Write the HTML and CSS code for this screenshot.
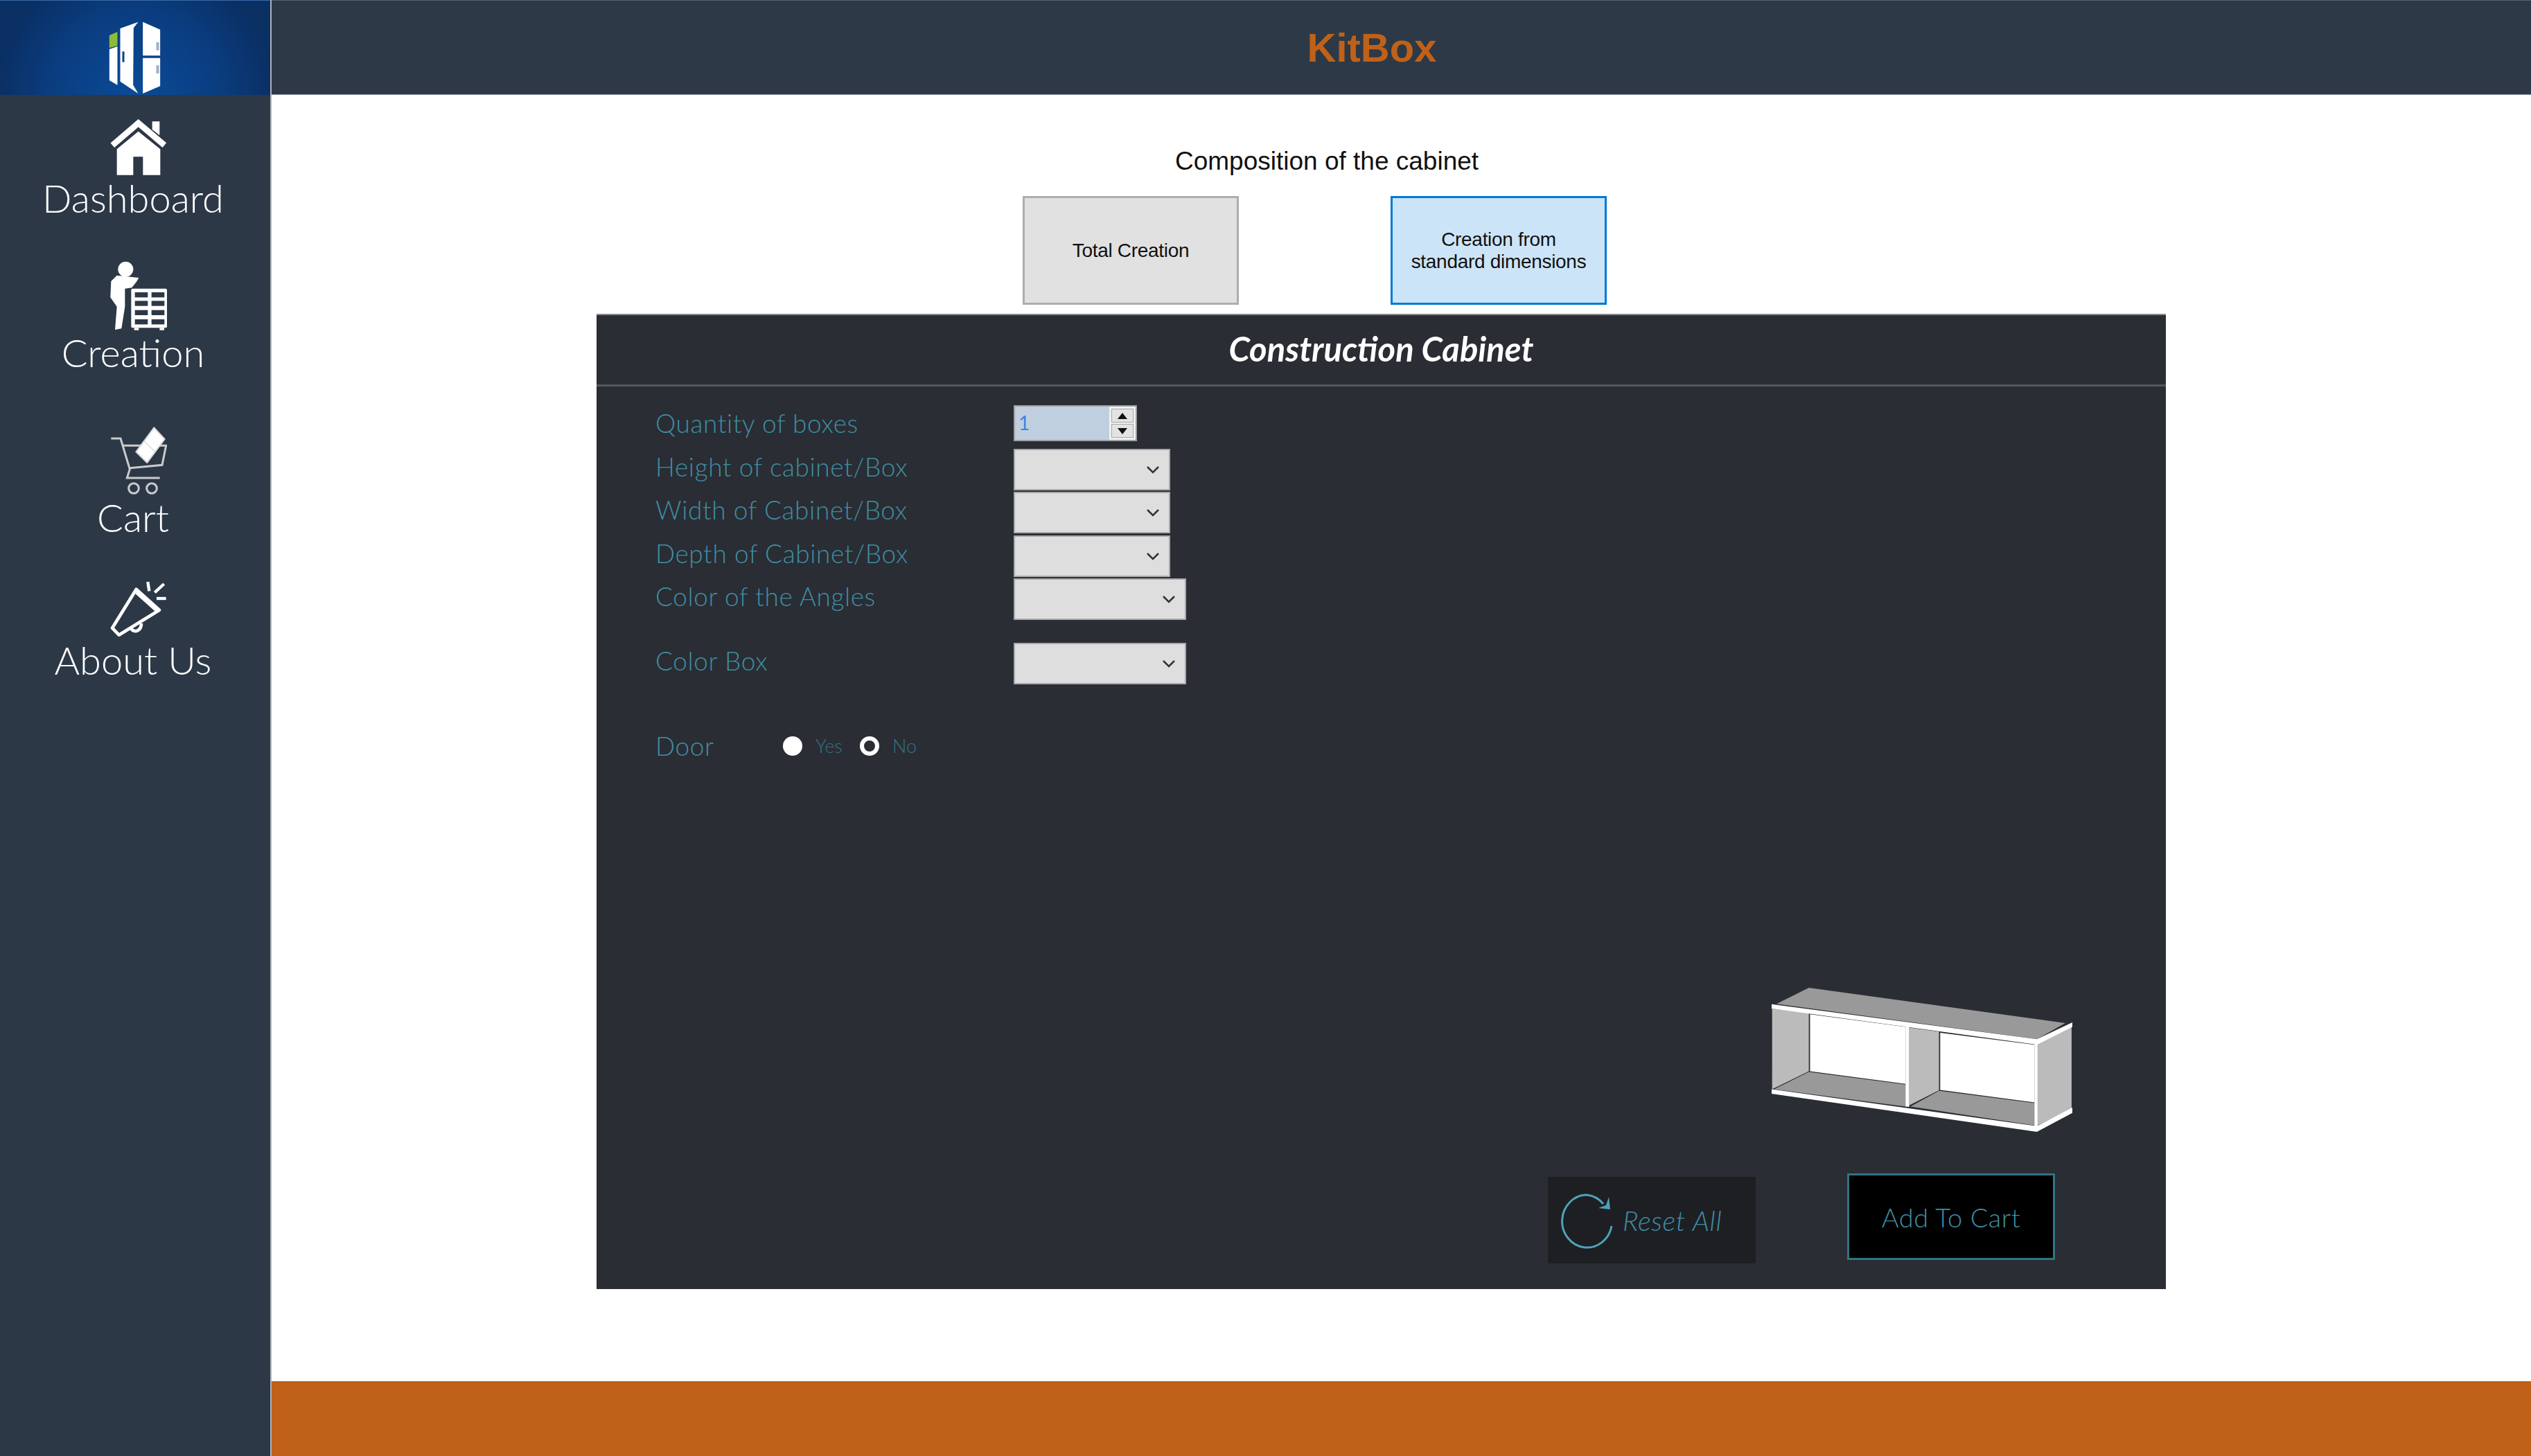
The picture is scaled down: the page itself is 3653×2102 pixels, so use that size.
FILE: index.html
```html
<!DOCTYPE html>
<html>
<head>
<title>KitBox</title>
<meta charset="UTF-8" />
<link rel="stylesheet" href="styles.css">
</head>
<body>
<div class="app">
	<nav class="sidebar">
		<div class="brand">
			<svg class="logo" viewBox="470 90 230 315">
				<polygon fill="#8dbb35" points="475,150 510,135 510,195 475,205"/>
				<polygon fill="#fff" points="475,210 510,198 510,365 475,345"/>
				<polygon fill="#fff" points="522,120 600,92 580,118 578,365 600,402 522,350"/>
				<rect fill="#0b4288" x="531" y="220" width="9" height="46"/>
				<polygon fill="#fff" points="620,92 695,125 695,238 620,238"/>
				<polygon fill="#fff" points="620,248 695,248 695,370 620,402"/>
				<rect fill="#9fb0c4" x="678" y="180" width="12" height="35"/>
				<rect fill="#9fb0c4" x="678" y="280" width="12" height="35"/>
			</svg>
		</div>
		<a class="navItem navDashboard">
			<svg class="navIcon" width="82" height="82" viewBox="468 515 246 246">
				<polygon fill="#fff" points="650,525 682,525 682,585 650,560"/>
				<polyline fill="none" stroke="#fff" stroke-width="26" points="478,628 590,532 703,628"/>
				<polygon fill="#fff" points="497,645 590,568 685,645 685,757 610,757 610,678 568,678 568,757 497,757"/>
			</svg>
			<span>Dashboard</span>
		</a>
		<a class="navItem navCreation">
			<svg class="navIcon" width="84" height="100" viewBox="458 1103 252 300">
				<circle fill="#fff" cx="528" cy="1138" r="33"/>
				<path fill="#fff" d="M490 1165 L585 1175 L575 1192 L555 1218 L525 1222 L525 1300 L510 1395 L482 1400 L490 1300 L462 1260 L465 1190 Z"/>
				<rect fill="#fff" x="552" y="1222" width="155" height="170" rx="6"/>
				<rect fill="#fff" x="565" y="1392" width="20" height="10"/>
				<rect fill="#fff" x="675" y="1392" width="20" height="10"/>
				<g fill="#2d3847">
					<rect x="568" y="1238" width="56" height="22"/>
					<rect x="640" y="1238" width="56" height="22"/>
					<rect x="568" y="1275" width="56" height="22"/>
					<rect x="640" y="1275" width="56" height="22"/>
					<rect x="568" y="1315" width="56" height="22"/>
					<rect x="640" y="1315" width="56" height="22"/>
					<rect x="568" y="1355" width="56" height="22"/>
					<rect x="640" y="1355" width="56" height="22"/>
				</g>
			</svg>
			<span>Creation</span>
		</a>
		<a class="navItem navCart">
			<svg class="navIcon" width="82" height="100" viewBox="470 233 246 300">
				<g fill="none" stroke="#c9cacc" stroke-width="9">
					<polyline points="474,287 515,287 555,420 543,458 685,458"/>
					<polyline points="525,318 712,318 695,402 555,415"/>
					<circle cx="572" cy="503" r="22"/>
					<circle cx="650" cy="503" r="22"/>
				</g>
				<polygon fill="#fff" stroke="#d8d8d8" stroke-width="6" stroke-linejoin="round" points="660,240 706,290 630,392 582,345"/>
				<line x1="618" y1="300" x2="665" y2="345" stroke="#d8d8d8" stroke-width="4"/>
			</svg>
			<span>Cart</span>
		</a>
		<a class="navItem navAbout">
			<svg class="navIcon" width="82" height="82" viewBox="465 885 246 246">
				<g fill="none" stroke="#fff" stroke-width="14" stroke-linejoin="round">
					<polygon points="578,920 678,1010 503,1118 474,1088"/>
					<line x1="558" y1="952" x2="648" y2="1032" transform="translate(20 -18)"/>
					<path d="M555 1090 C570 1112 600 1100 600 1068"/>
				</g>
				<g stroke="#fff" stroke-width="13">
					<line x1="628" y1="888" x2="634" y2="928"/>
					<line x1="698" y1="897" x2="658" y2="934"/>
					<line x1="666" y1="960" x2="707" y2="960"/>
				</g>
			</svg>
			<span>About Us</span>
		</a>
	</nav>
	<div class="main">
		<header class="topbar"><h1>KitBox</h1></header>
		<section class="work">
			<p class="composition">Composition of the cabinet</p>
			<div class="modes">
				<button class="mode">Total Creation</button>
				<button class="mode modeActive">Creation from standard dimensions</button>
			</div>
			<div class="panel">
				<h2 class="panelTitle">Construction Cabinet</h2>
				<form class="fields">
					<div class="row">
						<label>Quantity of boxes</label>
						<div class="spinner">
							<span class="spinValue">1</span>
							<span class="spinButtons">
								<i class="spinUp"></i>
								<i class="spinDown"></i>
							</span>
						</div>
					</div>
					<div class="row">
						<label>Height of cabinet/Box</label>
						<div class="combo"><svg width="20" height="12" viewBox="0 0 20 12"><polyline points="2,2 10,10 18,2"/></svg></div>
					</div>
					<div class="row">
						<label>Width of Cabinet/Box</label>
						<div class="combo"><svg width="20" height="12" viewBox="0 0 20 12"><polyline points="2,2 10,10 18,2"/></svg></div>
					</div>
					<div class="row">
						<label>Depth of Cabinet/Box</label>
						<div class="combo"><svg width="20" height="12" viewBox="0 0 20 12"><polyline points="2,2 10,10 18,2"/></svg></div>
					</div>
					<div class="row">
						<label>Color of the Angles</label>
						<div class="combo comboWide"><svg width="20" height="12" viewBox="0 0 20 12"><polyline points="2,2 10,10 18,2"/></svg></div>
					</div>
					<div class="row rowBox">
						<label>Color Box</label>
						<div class="combo comboWide"><svg width="20" height="12" viewBox="0 0 20 12"><polyline points="2,2 10,10 18,2"/></svg></div>
					</div>
					<div class="door">
						<label>Door</label>
						<span class="radio radioOn"></span><span class="radioText">Yes</span>
						<span class="radio radioOff"></span><span class="radioText">No</span>
					</div>
				</form>
				<div class="stage">
					<svg class="cabinet" width="434" height="208" viewBox="155 75 1213 625" preserveAspectRatio="none">
						<polygon fill="#999" points="175,145 305,75 1340,228 1225,298"/>
						<polygon fill="#bbb" points="157,165 305,185 305,437 157,515"/>
						<polygon fill="#fff" points="310,190 695,245 695,492 310,437"/>
						<polygon fill="#999" points="165,515 305,440 695,495 695,590"/>
						<polygon fill="#bbb" points="710,248 830,265 830,520 710,585"/>
						<polygon fill="#fff" points="835,270 1215,322 1215,572 835,518"/>
						<polygon fill="#999" points="715,590 830,522 1215,575 1215,672"/>
						<polygon fill="#bbb" points="1228,322 1365,245 1365,600 1228,672"/>
						<polygon fill="#fff" points="695,240 710,242 710,592 695,590"/>
						<polygon fill="#fff" points="1215,318 1228,320 1228,682 1215,680"/>
						<polygon fill="#fff" points="155,146 1225,298 1368,225 1368,245 1228,322 155,165"/>
						<polygon fill="#fff" points="155,515 1225,675 1368,595 1368,618 1225,700 155,535"/>
					</svg>
					<div class="actions">
						<button class="reset" type="button">
							<svg width="80" height="84" viewBox="0 0 80 84">
								<path d="M62 18 A36 38 0 0 0 38 5 A36 38 0 1 0 74 50"/>
								<polygon points="55,24 72,26 70,8 66,20"/>
							</svg>
							<span>Reset All</span>
						</button>
						<button class="addCart" type="button">Add To Cart</button>
					</div>
				</div>
			</div>
		</section>
		<footer class="bottombar"></footer>
	</div>
</div>
</body>
</html>
```

FILE: styles.css
```css
html, body{
	margin: 0 ;
	padding: 0 ;
	background: #fff ;
}
.app{
	display: flex ;
	width: 3653px ;
	height: 2102px ;
	overflow: hidden ;
	font-family: "Lato", "Liberation Sans", sans-serif ;
}

/* sidebar */
.sidebar{
	width: 390px ;
	flex: none ;
	display: flex ;
	flex-direction: column ;
	background: #2d3847 ;
	border-right: 2px solid #aeb2b8 ;
}
.brand{
	height: 137px ;
	flex: none ;
	box-sizing: border-box ;
	padding: 30px 0 2px 0 ;
	display: flex ;
	justify-content: center ;
	background: radial-gradient(ellipse 200px 200px at 50% 100%, #0b4b98, #0a3d80 60%, #0a2f63) ;
	border-top: 1px solid #3a6aa8 ;
}
.logo{
	width: 77px ;
	height: 105px ;
	margin-left: -2px ;
}
.navItem{
	display: flex ;
	flex-direction: column ;
	align-items: center ;
	color: #fff ;
	font-size: 56px ;
	font-weight: 300 ;
	line-height: 60px ;
}
.navIcon{
	display: block ;
	margin-left: 10px ;
}
.navDashboard{ margin-top: 35px ; }
.navCreation{ margin-top: 61px ; }
.navCart{ margin-top: 76px ; }
.navAbout{ margin-top: 62px ; }
.navItem span{
	margin-top: 2px ;
	margin-right: 6px ;
}

/* header and footer */
.main{
	flex: 1 ;
	display: flex ;
	flex-direction: column ;
	min-width: 0 ;
}
.topbar{
	height: 137px ;
	flex: none ;
	box-sizing: border-box ;
	display: flex ;
	align-items: center ;
	justify-content: center ;
	background: #2d3947 ;
	border-top: 1px solid #5b6470 ;
	border-bottom: 1px solid #8a9099 ;
	padding-right: 0 ;
}
.topbar h1{
	margin: 0 0 0 -85px ;
	color: #bf6118 ;
	font: bold 58px "Liberation Sans", sans-serif ;
}
.bottombar{
	height: 108px ;
	flex: none ;
	background: #bf6118 ;
}
.work{
	flex: 1 ;
	min-height: 0 ;
}

/* mode buttons */
.composition{
	margin: 73px 0 0 1304px ;
	height: 46px ;
	line-height: 46px ;
	font: 37px/46px "Liberation Sans", sans-serif ;
	color: #111 ;
}
.modes{
	display: flex ;
	gap: 219px ;
	margin: 27px 0 0 1084px ;
}
.mode{
	width: 312px ;
	height: 157px ;
	padding: 0 20px ;
	border: 3px solid #adadad ;
	background: #e1e1e1 ;
	color: #111 ;
	font: 28px/32px "Liberation Sans", sans-serif ;
	letter-spacing: -0.3px ;
}
.modeActive{
	border-color: #0078d7 ;
	background: #cce4f7 ;
}

/* panel */
.panel{
	width: 2265px ;
	height: 1408px ;
	box-sizing: border-box ;
	margin: 13px 0 0 469px ;
	display: flex ;
	flex-direction: column ;
	background: #2a2d34 ;
	border-top: 2px solid #8b8c90 ;
}
.panelTitle{
	height: 103px ;
	margin: 0 ;
	box-sizing: border-box ;
	border-bottom: 3px solid #55575c ;
	text-align: center ;
	color: #fff ;
	font: italic bold 49px/96px "Lato", sans-serif ;
}
.fields{
	padding: 27px 0 0 85px ;
}
.row{
	display: flex ;
	height: 62.5px ;
}
.row label, .door label{
	width: 517px ;
	flex: none ;
	height: 52px ;
	line-height: 52px ;
	color: #3f8ea3 ;
	font-size: 37px ;
	font-weight: 300 ;
	letter-spacing: 0.6px ;
}
.rowBox{
	margin-top: 30.5px ;
}
.spinner{
	width: 178px ;
	height: 52px ;
	box-sizing: border-box ;
	display: flex ;
	justify-content: space-between ;
	background: #bfcfdf ;
	border: 2px solid #a0a0a0 ;
}
.spinValue{
	padding-left: 5px ;
	color: #3b86e0 ;
	font-size: 28px ;
	line-height: 46px ;
}
.spinButtons{
	width: 38px ;
	display: flex ;
	flex-direction: column ;
	gap: 2px ;
	background: #f0f0f0 ;
	padding: 3px ;
	box-sizing: border-box ;
}
.spinButtons i{
	flex: 1 ;
	display: flex ;
	align-items: center ;
	justify-content: center ;
	background: #e3e3e3 ;
	border: 1px solid #a8a8a8 ;
}
.spinUp::after, .spinDown::after{
	content: '' ;
	border-left: 7px solid transparent ;
	border-right: 7px solid transparent ;
}
.spinUp::after{
	border-bottom: 9px solid #111 ;
}
.spinDown::after{
	border-top: 9px solid #111 ;
}
.combo{
	width: 226px ;
	height: 60px ;
	box-sizing: border-box ;
	display: flex ;
	align-items: center ;
	justify-content: flex-end ;
	padding-right: 13px ;
	background: #dedede ;
	border: 2px solid #a9a9a9 ;
}
.comboWide{
	width: 249px ;
}
.combo polyline{
	fill: none ;
	stroke: #333 ;
	stroke-width: 2.5 ;
}
.door{
	display: flex ;
	align-items: center ;
	margin-top: 60px ;
}
.door label{
	width: 184px ;
}
.radio{
	width: 28px ;
	height: 28px ;
	box-sizing: border-box ;
	flex: none ;
	border-radius: 50% ;
	background: #fff ;
}
.radioOff{
	background: #2a2d34 ;
	border: 6px solid #fff ;
}
.radioText{
	width: 83px ;
	padding-left: 19px ;
	box-sizing: border-box ;
	color: #2f7487 ;
	font-size: 27px ;
	font-weight: 300 ;
}

/* cabinet and actions */
.stage{
	margin-top: auto ;
	display: flex ;
	flex-direction: column ;
	padding-bottom: 37px ;
}
.cabinet{
	display: block ;
	align-self: flex-end ;
	margin-right: 135px ;
	margin-bottom: 60px ;
}
.actions{
	display: flex ;
	justify-content: flex-end ;
	align-items: flex-start ;
	gap: 132px ;
	padding-right: 160px ;
}
.reset{
	width: 300px ;
	height: 125px ;
	margin-top: 5px ;
	padding: 0 0 0 18px ;
	box-sizing: border-box ;
	display: flex ;
	align-items: center ;
	gap: 10px ;
	border: 0 ;
	background: #1e1f23 ;
	color: #3f8ea3 ;
	font: italic 300 40px "Lato", sans-serif ;
	letter-spacing: 0.6px ;
}
.reset svg{
	flex: none ;
}
.reset path{
	fill: none ;
	stroke: #4da3b8 ;
	stroke-width: 3 ;
}
.reset polygon{
	fill: #4da3b8 ;
}
.addCart{
	width: 300px ;
	height: 125px ;
	padding: 0 ;
	border: 3px solid #2f7487 ;
	background: #000 ;
	color: #3f8ea3 ;
	font: 300 38px "Lato", sans-serif ;
	letter-spacing: 0.5px ;
}
```
